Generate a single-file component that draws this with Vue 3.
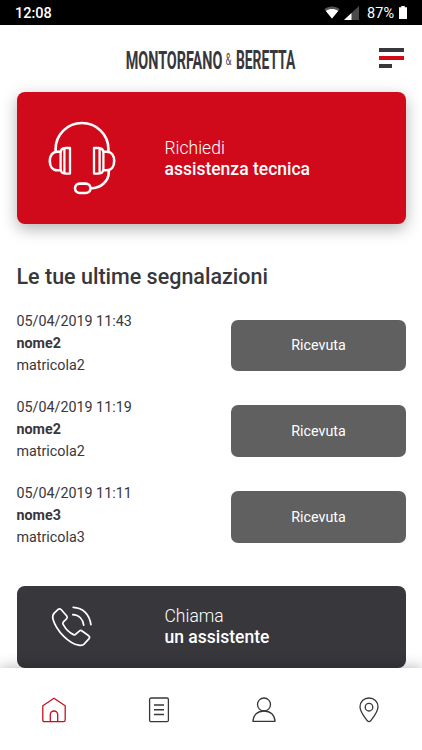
<script setup>
import { ref } from 'vue'

const reports = ref([
  { id: 1, date: '05/04/2019 11:43', name: 'nome2', serial: 'matricola2', status: 'Ricevuta' },
  { id: 2, date: '05/04/2019 11:19', name: 'nome2', serial: 'matricola2', status: 'Ricevuta' },
  { id: 3, date: '05/04/2019 11:11', name: 'nome3', serial: 'matricola3', status: 'Ricevuta' },
])

const activeTab = ref('home')
const tabs = ['home', 'list', 'user', 'map']
</script>

<template>
  <div class="screen">
    <div class="status-bar">
      <span class="clock">12:08</span>
      <svg class="wifi" width="16" height="13" viewBox="0 0 16 13">
        <path d="M0.3 3.2C4.7 -0.4 11.3 -0.4 15.7 3.2L8 12.8Z" fill="#555" />
        <path d="M1.9 4.9C5.5 2.4 10.5 2.4 14.1 4.9L8 12.6Z" fill="#fff" />
      </svg>
      <svg class="signal" width="15" height="14" viewBox="0 0 15 14">
        <path d="M15 0V14H0Z" fill="#4a4a4a" />
        <path d="M7.5 7V14H0Z" fill="#fff" />
      </svg>
      <span class="battery-text">87%</span>
      <svg class="battery" width="8" height="13" viewBox="0 0 8 13">
        <path d="M2.3 0H5.7V1.2H8V13H0V1.2H2.3Z" fill="#fff" />
      </svg>
    </div>

    <header class="header">
      <svg class="logo" width="174" height="34" viewBox="0 0 174 34">
        <text class="brand" transform="translate(-0.3 21.3) scale(0.543 1)">MONTORFANO</text>
        <text class="amp" transform="translate(99.6 17.4) scale(0.6 1)">&amp;</text>
        <text class="brand" transform="translate(110 21.3) scale(0.523 1)">BERETTA</text>
      </svg>
      <button class="menu">
        <span></span>
        <span class="red"></span>
        <span class="short"></span>
      </button>
    </header>

    <main class="content">
      <a class="card card-red">
        <svg class="headset" width="68" height="74" viewBox="0 0 68 74" fill="none" stroke="#fff" stroke-width="2.6">
          <path d="M7.6 30V28C7.6 13.5 19.5 2 34 2S60.4 13.5 60.4 28V30" />
          <path d="M12.5 30.7H9.2C4.7 30.7 1.8 34.5 1.8 40S4.7 49.3 9.2 49.3H12.5" />
          <path d="M55.5 30.7H58.8C63.3 30.7 66.2 34.5 66.2 40S63.3 49.3 58.8 49.3H55.5" />
          <path d="M22 27H17.5Q12.6 27 12.6 32V47.5Q12.6 52.6 17.5 52.6H22ZM16.4 28V52" stroke-width="2.3" stroke-linejoin="round" />
          <path d="M46 27H50.5Q55.4 27 55.4 32V47.5Q55.4 52.6 50.5 52.6H46ZM51.6 28V52" stroke-width="2.3" stroke-linejoin="round" />
          <path d="M60.8 49.5V51C60.8 60 53 67.3 43 67.3" />
          <rect x="27" y="62.6" width="15.5" height="9.4" rx="4.7" />
        </svg>
        <div class="card-text">
          <span>Richiedi</span>
          <strong>assistenza tecnica</strong>
        </div>
      </a>

      <h2>Le tue ultime segnalazioni</h2>

      <ul class="reports">
        <li v-for="report in reports" :key="report.id">
          <div class="info">
            <span>{{ report.date }}</span>
            <b>{{ report.name }}</b>
            <span>{{ report.serial }}</span>
          </div>
          <button class="state">{{ report.status }}</button>
        </li>
      </ul>

      <a class="card card-dark">
        <svg class="phone" width="42" height="43" viewBox="0 0 42 43" fill="none" stroke="#fff" stroke-width="1.7" stroke-linecap="round" stroke-linejoin="round">
          <path d="M7.4 4.2Q8.8 3.3 10.1 4.5L15.8 11Q16.8 12.4 15.5 13.9L12.2 17.2Q11.4 18.3 12.3 19.7C15 24.6 18.5 28 22.6 29.6Q23.9 30.1 24.8 29.1L28.3 26.1Q29.8 24.9 31.1 26L37.7 30.8Q39.2 32 38.1 33.6L33.7 38.4Q31.8 41 27.8 40.2C18 38.4 5.5 26.2 2 14.2Q1 10.5 3.2 8.2Z" />
          <path d="M21.8 9.7C28 10 32 14.3 32.7 20.2" />
          <path d="M22.2 2.3C32 2.7 38.7 9.5 39.9 19.7" />
        </svg>
        <div class="card-text">
          <span>Chiama</span>
          <strong>un assistente</strong>
        </div>
      </a>
    </main>

    <nav class="tab-bar">
      <button v-for="tab in tabs" :key="tab" :class="{ active: activeTab === tab }" @click="activeTab = tab">
        <svg width="26" height="26" viewBox="0 0 26 26" fill="none" stroke="currentColor" stroke-width="1.3" stroke-linejoin="round">
          <template v-if="tab === 'home'">
            <path d="M1.8 8.7L13 1.2L24.2 8.7V23Q24.2 24.6 22.6 24.6H3.4Q1.8 24.6 1.8 23Z" />
            <path d="M9.3 24.6V17.7A3.7 3.7 0 0 1 16.7 17.7V24.6" />
          </template>
          <template v-else-if="tab === 'list'">
            <rect x="3.6" y="1" width="18.8" height="23.7" rx="1.5" />
            <path d="M8 8.1H18M8 12.8H18M8 17.6H18" stroke-width="1.5" />
          </template>
          <template v-else-if="tab === 'user'">
            <circle cx="13" cy="7.5" r="6.5" />
            <path d="M2 24.4C2.2 18 6.5 14 13 14S23.8 18 24 24.4Z" />
          </template>
          <template v-else>
            <path d="M13 1C7.8 1 4 4.9 4 9.8C4 15 8.3 19.8 11.3 23.8Q13 25.6 14.7 23.8C17.7 19.8 22 15 22 9.8C22 4.9 18.2 1 13 1Z" />
            <circle cx="13" cy="10.2" r="3.8" />
          </template>
        </svg>
      </button>
    </nav>
  </div>
</template>

<style>
body {
  margin: 0;
  background: #fff;
}
</style>

<style scoped>
.screen {
  display: flex;
  flex-direction: column;
  width: 422px;
  height: 750px;
  overflow: hidden;
  background: #fff;
  color: #38373c;
  font-family: Roboto, sans-serif;
}

button {
  border: 0;
  padding: 0;
  background: none;
  font-family: inherit;
}

.status-bar {
  display: flex;
  flex: none;
  align-items: center;
  height: 24.5px;
  padding: 2px 15px 0;
  box-sizing: border-box;
  background: #000;
  color: #fff;
  font-size: 14.5px;
  font-weight: 500;
}

.clock {
  flex: 1;
}

.wifi {
  margin-top: -2px;
}

.signal {
  margin: -1px 8px 0 4px;
}

.battery-text {
  font-weight: 400;
}

.battery {
  margin-left: 5px;
  margin-top: -1px;
}

.header {
  display: flex;
  flex: none;
  height: 67.5px;
  box-sizing: border-box;
  padding: 23.5px 18px 0 126px;
  justify-content: space-between;
  align-items: flex-start;
}

.logo {
  overflow: visible;
}

.brand {
  fill: #38373c;
  font-size: 26.5px;
  font-weight: 700;
}

.amp {
  fill: #55545a;
  font-size: 16px;
  font-weight: 400;
}

.menu {
  display: flex;
  flex-direction: column;
  gap: 4px;
  width: 25px;
}

.menu span {
  height: 4px;
  width: 25px;
  background: #38373c;
}

.menu .red {
  background: #d00a1a;
}

.menu .short {
  width: 13px;
}

.content {
  flex: 1;
  min-height: 0;
  padding: 0 16px 0 16.5px;
}

.card {
  display: flex;
  align-items: center;
  border-radius: 8px;
  box-sizing: border-box;
  color: #fff;
}

.card-red {
  height: 132px;
  margin-top: 0.4px;
  padding: 1px 0 0 31px;
  background: #d00a1a;
  box-shadow: 0 5px 16px rgba(0, 0, 0, 0.3);
}

.card-dark {
  height: 81.5px;
  margin-top: 37.7px;
  padding: 1px 0 0 34px;
  background: #38373c;
}

.card-text {
  display: flex;
  flex-direction: column;
  font-size: 17.5px;
  line-height: 21px;
}

.card-red .card-text {
  padding-top: 1px;
}

.card-text span {
  font-weight: 300;
}

.card-text strong {
  font-weight: 500;
}

.headset {
  margin: -1px 49px 0 0;
}

.phone {
  margin: -1px 72px 0 0;
}

h2 {
  margin: 39.6px 0 0;
  font-size: 21.5px;
  font-weight: 500;
  line-height: 26px;
}

.reports {
  display: flex;
  flex-direction: column;
  gap: 20.3px;
  margin: 21.2px 0 0;
  padding: 0;
  list-style: none;
}

.reports li {
  display: flex;
  justify-content: space-between;
  align-items: center;
}

.info {
  display: flex;
  flex-direction: column;
  font-size: 14.3px;
  line-height: 21.85px;
}

.state {
  width: 175px;
  height: 51.5px;
  margin-top: 2.8px;
  border-radius: 7px;
  background: #606060;
  color: #fff;
  font-size: 14.3px;
}

.tab-bar {
  position: relative;
  display: flex;
  flex: none;
  height: 82px;
  padding: 2px 0 0 1px;
  box-sizing: border-box;
  background: #fff;
  box-shadow: 0 0 14px rgba(0, 0, 0, 0.3);
}

.tab-bar button {
  display: flex;
  flex: 1;
  justify-content: center;
  align-items: center;
  color: #38373c;
}

.tab-bar .active {
  color: #c8101f;
}
</style>
